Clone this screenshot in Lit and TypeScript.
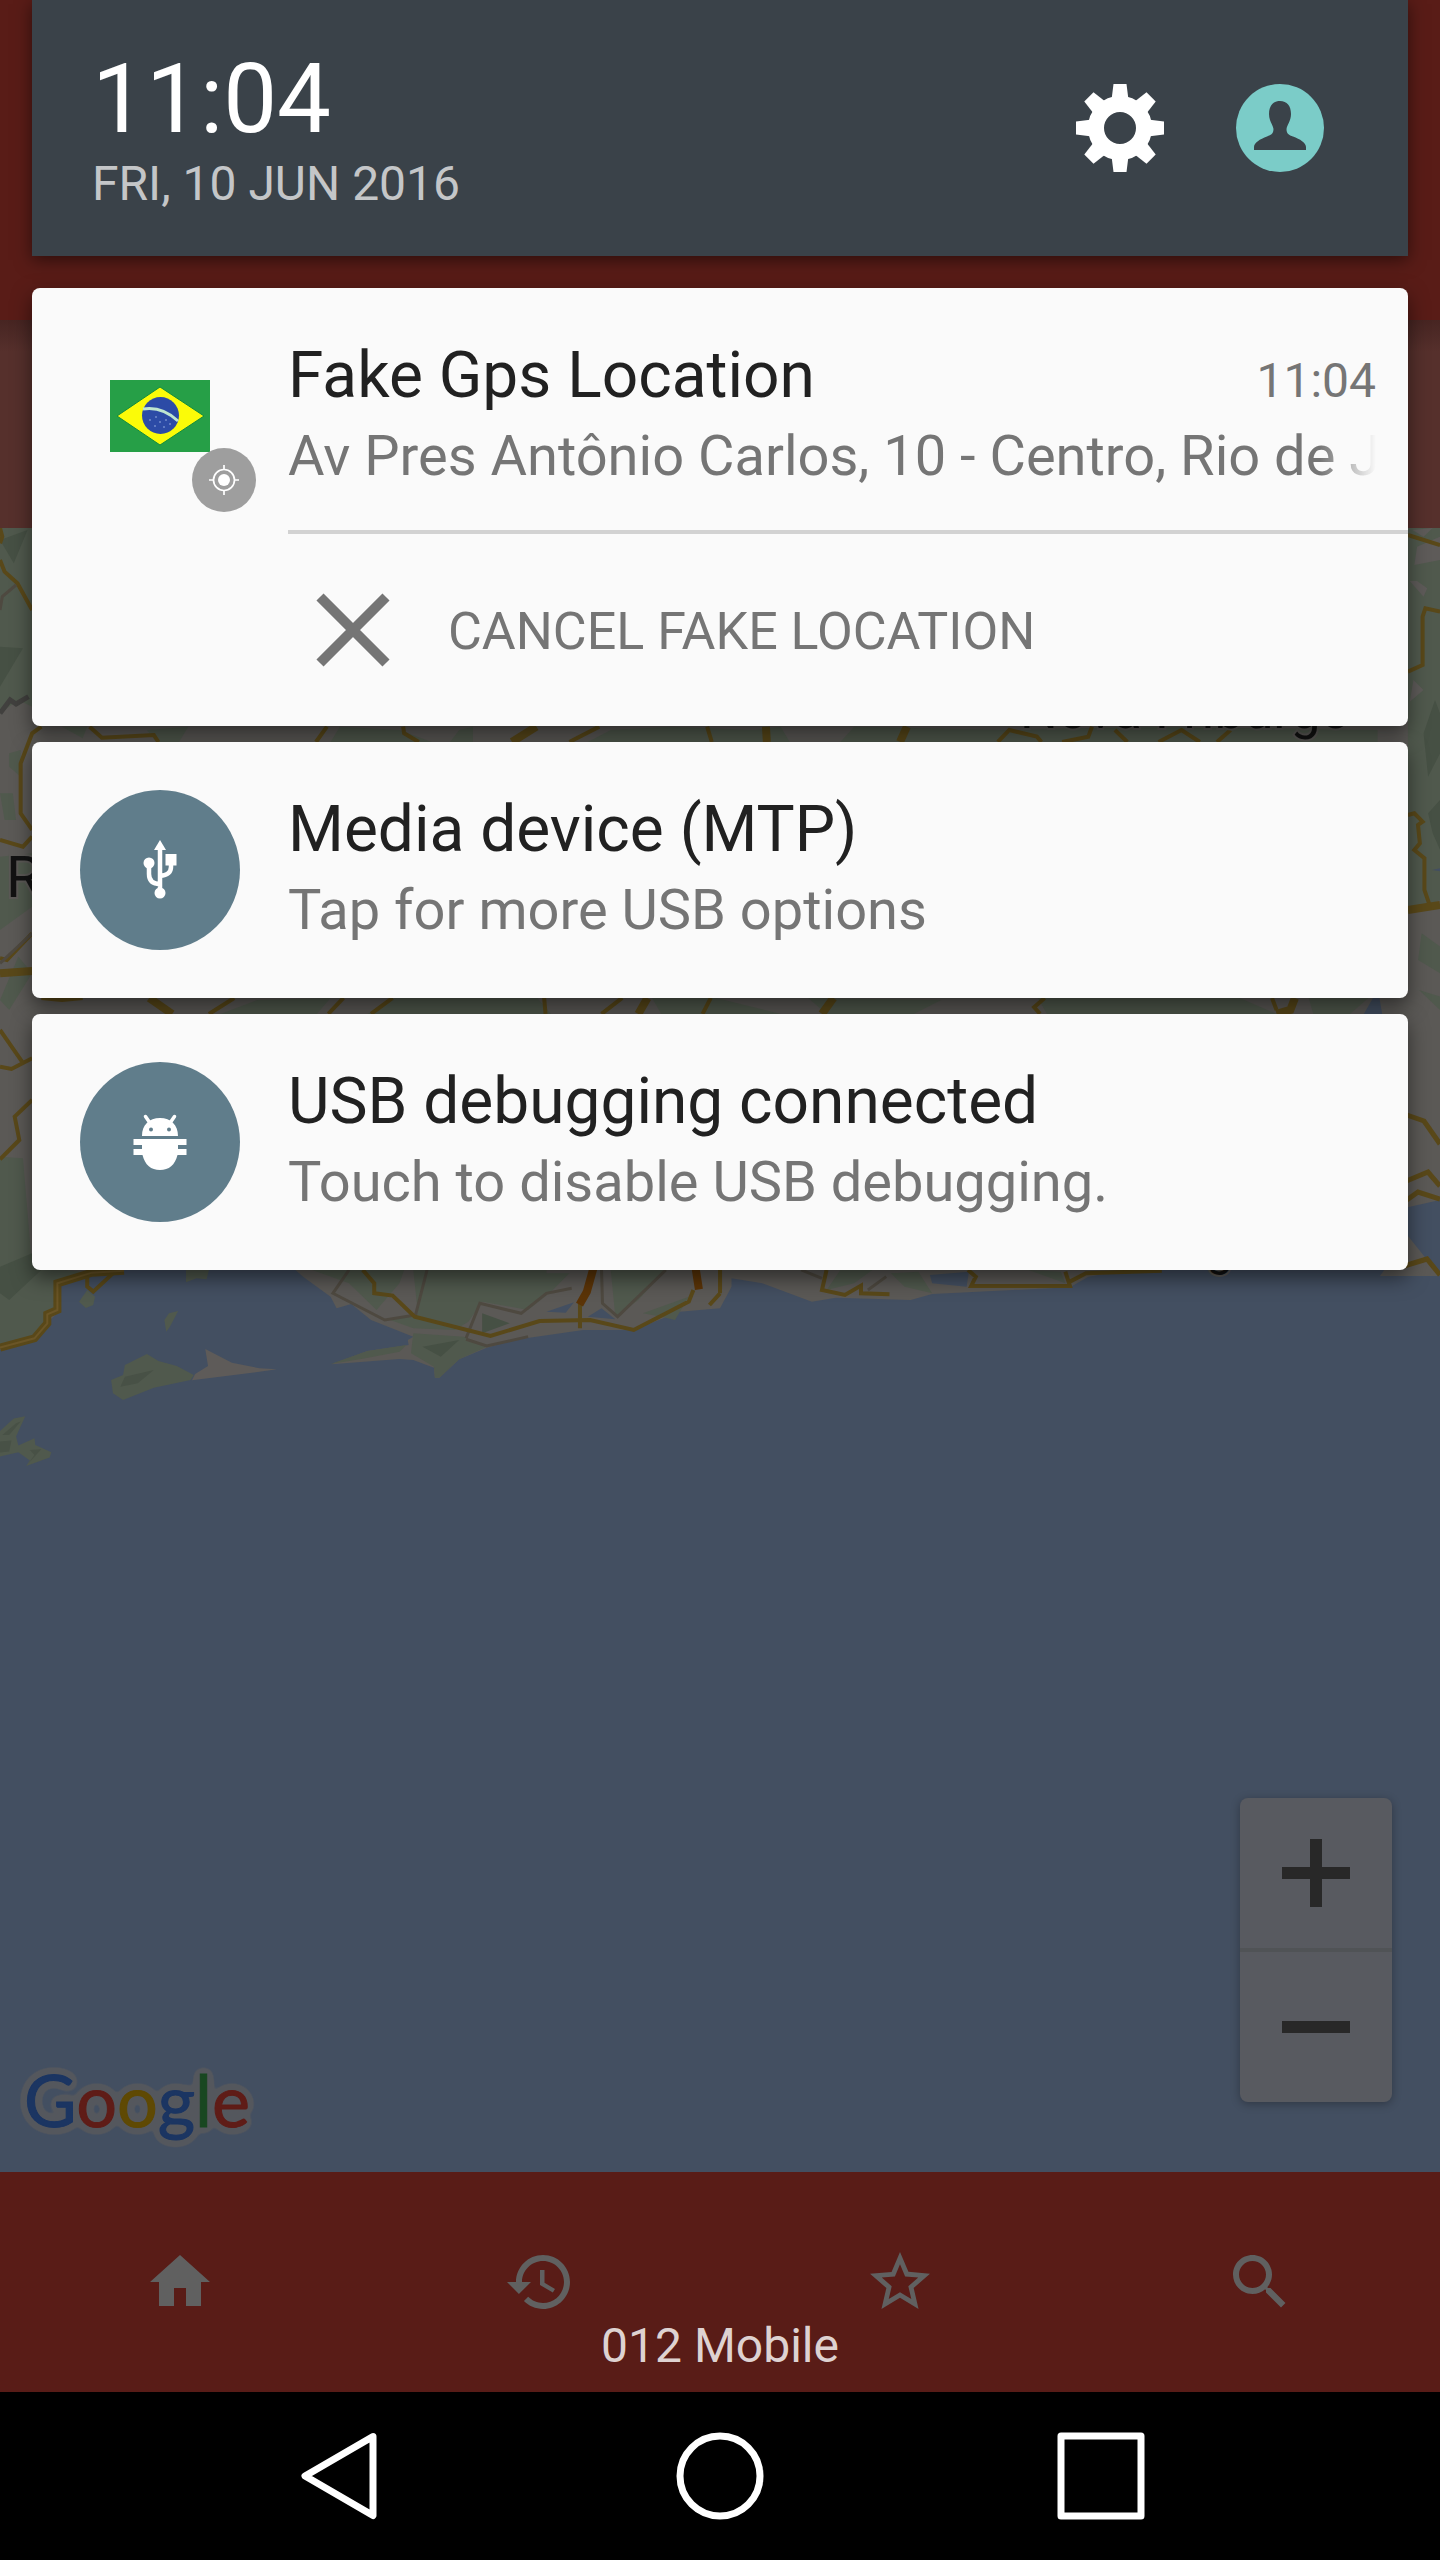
import { LitElement, html, css, svg, type TemplateResult } from "lit";
import { customElement, property } from "lit/decorators.js";

const FONT = css`Roboto, "Noto Sans", sans-serif`;

const resetButton = css`
  button {
    display: flex;
    align-items: center;
    justify-content: center;
    margin: 0;
    padding: 0;
    border: 0;
    background: none;
    color: inherit;
    font: inherit;
    cursor: pointer;
  }
  svg {
    display: block;
    flex: none;
  }
`;

/* ---------- Icons ---------- */

const gearIcon = html`<svg width="88" height="88" viewBox="-44 -44 88 88" aria-hidden="true">
  <circle r="24" fill="none" stroke="#fff" stroke-width="16"></circle>
  ${[0, 45, 90, 135, 180, 225, 270, 315].map(
    (a) => svg`<path d="M-6.5-44h13L8.5-28H-8.5z" fill="#fff" transform="rotate(${a})"></path>`
  )}
</svg>`;

const avatarIcon = html`<svg width="88" height="88" viewBox="-44 -44 88 88" aria-hidden="true">
  <circle r="44" fill="#7bccc8"></circle>
  <path
    fill="#3a4249"
    d="M0-27C7-27 11-22 11-14 11-7 7-3 6.5 1 6.5 6 9 7 13 8.500 20 11 26 15 26 19V22H-26V19C-26 15-20 11-13 8.500-9 7-6.500 6-6.500 1-7-3-11-7-11-14-11-22-7-27 0-27z"
  ></path>
</svg>`;

const flagIcon = html`<svg width="160" height="160" viewBox="0 0 160 160" overflow="visible" aria-hidden="true">
  <rect x="30" y="44" width="100" height="72" fill="#269f47"></rect>
  <path d="M80 51 124 80 80 109 37 80z" fill="#fbfb08" stroke="#128c3c" stroke-width="1"></path>
  <circle cx="80.500" cy="79.500" r="18.500" fill="#2c4ba6"></circle>
  <path d="M63 73Q82 70 98 85" fill="none" stroke="#bfe6cf" stroke-width="3"></path>
  <g fill="#6f8acb">
    <circle cx="70" cy="84" r="1"></circle><circle cx="76" cy="81" r="1"></circle>
    <circle cx="80" cy="86" r="1"></circle><circle cx="86" cy="84" r="1"></circle>
    <circle cx="75" cy="90" r="1"></circle><circle cx="84" cy="91" r="1"></circle>
    <circle cx="90" cy="88" r="1"></circle>
  </g>
  <circle cx="144" cy="144" r="32" fill="#9e9e9e"></circle>
  <g transform="translate(144 144)" fill="none" stroke="#fff" stroke-width="1.700">
    <circle r="10.500"></circle>
    <circle r="6" fill="#fff" stroke="none"></circle>
    <path d="M0-15v5M0 15v-5M-15 0h5M15 0h-5"></path>
  </g>
</svg>`;

const usbIcon = html`<svg width="160" height="160" viewBox="-80 -80 160 160" aria-hidden="true">
  <circle r="80" fill="#607d8b"></circle>
  <g fill="#fff">
    <path d="M0-30 6-20H-6z"></path>
    <circle cy="23" r="5.500"></circle>
    <circle cx="-11" cy="-7" r="5.500"></circle>
    <rect x="5.500" y="-16" width="11" height="11.500"></rect>
  </g>
  <path
    fill="none" stroke="#fff" stroke-width="4.500"
    d="M0-22V22M-11-5V4Q-11 14 0 14M11-6V-3Q11 5 0 6"
  ></path>
</svg>`;

const bugIcon = html`<svg width="160" height="160" viewBox="-80 -80 160 160" aria-hidden="true">
  <circle r="80" fill="#607d8b"></circle>
  <path
    fill="#fff"
    d="M-18-6C-18-17-11-24 0-24S18-17 18-6zM-26.500-3h53v6H18v4h8.500v6H17.500C15 23 9 28 0 28S-15 23-17.500 13h-9V7h8.500V3h-8.500z"
  ></path>
  <path d="M-10-19-14.500-25.500M10-19 14.500-25.500" stroke="#fff" stroke-width="3.500" stroke-linecap="round"></path>
  <circle cx="-9" cy="-12.500" r="2" fill="#607d8b"></circle>
  <circle cx="9" cy="-12.500" r="2" fill="#607d8b"></circle>
</svg>`;

const crossIcon = html`<svg width="128" height="128" viewBox="-64 -64 128 128" aria-hidden="true">
  <path d="M-32-33 34 33M34-33-32 33" stroke="#757575" stroke-width="10"></path>
</svg>`;

const tabIcon = (d: string) => html`<svg width="72" height="72" viewBox="0 0 24 24" fill="#606060" aria-hidden="true">
  <path d=${d}></path>
</svg>`;

const navIcon = (shape: TemplateResult) => html`<svg
  width="96" height="96" viewBox="-48 -48 96 96" fill="none" stroke="#fff" stroke-width="7"
  stroke-linejoin="round" aria-hidden="true"
>${shape}</svg>`;

/* ---------- Notification card ---------- */

@customElement("notification-card")
export class NotificationCard extends LitElement {
  @property() heading = "";
  @property() text = "";
  @property() time = "";
  @property() action = "";
  @property({ attribute: false }) icon: unknown = null;

  static styles = [
    resetButton,
    css`
      :host {
        display: block;
        font-family: ${FONT};
      }
      .card {
        background: #fafafa;
        border-radius: 8px;
        box-shadow: 0 8px 20px rgba(0, 0, 0, 0.5);
      }
      .head {
        display: flex;
        gap: 48px;
        padding: 48px 32px 46px 48px;
      }
      .with-action .head {
        padding-bottom: 32px;
      }
      .body {
        flex: 1;
        min-width: 0;
        padding-top: 2px;
      }
      .top {
        display: flex;
        align-items: baseline;
        justify-content: space-between;
      }
      h2 {
        margin: 0;
        font-size: 64px;
        font-weight: 400;
        line-height: 76px;
        color: #212121;
        white-space: nowrap;
      }
      time {
        font-size: 48px;
        line-height: 56px;
        color: #757575;
      }
      p {
        margin: 0 -16px 0 0;
        font-size: 56px;
        line-height: 84px;
        color: #757575;
        white-space: nowrap;
        overflow: hidden;
        mask-image: linear-gradient(to left, transparent 16px, #000 72px);
      }
      .actions {
        margin-left: 256px;
        border-top: 4px solid #d2d2d2;
      }
      .actions button {
        gap: 32px;
        height: 192px;
        color: #757575;
        font-size: 52px;
        line-height: 60px;
        text-transform: uppercase;
        white-space: nowrap;
      }
      .actions span {
        padding-top: 4px;
      }
    `,
  ];

  render() {
    return html`<article class="card ${this.action ? "with-action" : ""}">
      <div class="head">
        ${this.icon}
        <div class="body">
          <div class="top">
            <h2>${this.heading}</h2>
            ${this.time ? html`<time>${this.time}</time>` : null}
          </div>
          <p>${this.text}</p>
        </div>
      </div>
      ${this.action
        ? html`<div class="actions"><button type="button">${crossIcon}<span>${this.action}</span></button></div>`
        : null}
    </article>`;
  }
}

/* ---------- Map ---------- */

@customElement("coast-map")
export class CoastMap extends LitElement {
  static styles = [
    resetButton,
    css`
      :host {
        display: grid;
        background: #434f61;
        overflow: hidden;
        font-family: ${FONT};
      }
      .canvas {
        grid-area: 1 / 1;
        width: 100%;
        height: 100%;
        min-height: 0;
        contain: size;
      }
      .label {
        font-family: ${FONT};
        fill: #121212;
        stroke: #5b5956;
        stroke-width: 4px;
        paint-order: stroke;
      }
      .overlay {
        grid-area: 1 / 1;
        display: flex;
        align-items: flex-end;
        justify-content: space-between;
        padding: 0 48px 20px 16px;
      }
      .zoom {
        margin-bottom: 50px;
        width: 152px;
        border-radius: 8px;
        background: #585a60;
        box-shadow: 0 2px 10px rgba(0, 0, 0, 0.3);
      }
      .zoom button {
        width: 100%;
        height: 150px;
      }
      .zoom button + button {
        border-top: 4px solid #505356;
        height: 154px;
      }
      .google {
        font-family: Lato, sans-serif;
        font-size: 72px;
        font-weight: 400;
        stroke-width: 1px;
      }
    `,
  ];

  render() {
    return html`
      <svg class="canvas" viewBox="0 528 1440 1644" preserveAspectRatio="xMidYMin slice" role="img" aria-label="Map">
        <rect y="528" width="1440" height="560" fill="#5b5956"></rect>
        <g transform="translate(0 1000) scale(0.4592 0.3333)">
          <path fill="#5b5956" d="M0 0V1050L75 1020 105 965 128 935 132 850 195 815 280 800H635L660 830 720 890 733 925 765 912 808 960 900 1010 888 1020 890 1035 800 1053 722 1093 870 1077 900 1080 945 1103 947 1133H957L1000 1078 1060 1043 1130 1018 1270 990 1380 990 1480 935 1568 925 1593 860V835L1660 850 1768 905 1820 893 1983 900 2030 882 2330 862 2370 830 2470 806 3136 600V0z"></path>
          <path fill="#50594d" d="M0 470 50 475 70 800 180 815 128 850 122 930 75 1015 0 1040zM680 810H880L870 850 820 930 760 850zM850 960 900 985 990 990 1020 965 1050 905 1150 930 1200 875 1240 820H1190V810H900L910 940zM900 1000 1010 1010 1060 1040 1000 1078 957 1133H947L945 1100 895 1060zM720 1092 800 1053 885 1035 870 1055 790 1076zM1330 810H1450L1390 900 1340 950zM1400 940 1500 890 1470 960 1440 950zM1800 870 1830 810H1900L1860 850zM1940 820 2000 815 2030 880 1970 860zM2240 810 2310 815 2320 850z"></path>
          <path fill="#465044" d="M0 800 70 760 90 810 20 900 0 880zM920 1040 1000 1020 960 1070zM1050 940 1110 970 1050 1000z"></path>
          <path fill="#50594d" d="M320 1062 345 1083 385 1098 422 1125 415 1140 335 1163 268 1200 246 1180 242 1140 268 1125 272 1095zM405 810H455L450 838 428 835 405 847zM190 870 207 890 203 915 187 924 172 905zM388 933 370 980 362 995 358 960 368 940zM55 1249 35 1310 40 1337 75 1315 77 1335 112 1357 108 1373 57 1398 65 1382 40 1357 0 1370V1293L30 1256z"></path>
          <path fill="#5e5b59" d="M447 1047 505 1088 565 1105 603 1108 540 1120 418 1141 425 1122 453 1098z"></path>
          <path fill="#485146" d="M272 1130 335 1110 300 1150 262 1160zM0 1325 25 1322 20 1355 0 1358zM35 1270 45 1265 20 1305 5 1305zM65 1350 90 1348 62 1390 75 1365z"></path>
          <path fill="#434f61" d="M1190 935 1250 907 1232 938zM1280 950 1310 925 1340 958zM2025 825 2110 815 2105 860 2030 850z"></path>
          <g fill="none" stroke="#4e4940" stroke-width="3">
            <path vector-effect="non-scaling-stroke" d="M760 810 725 880 838 960 905 945 930 810M1015 1015 1045 910 1135 940 1190 880 1245 865M1310 810 1312 910 1345 950 1450 810M1015 1018 1060 1038 1150 1010M1745 810 1790 835M1930 830 1890 870"></path>
          </g>
          <g fill="none" stroke="#594819" stroke-width="4">
            <path vector-effect="non-scaling-stroke" d="M790 810 815 850V880L855 887 903 950 1068 1008 1175 963 1285 960 1380 990 1500 905 1510 870M1263 910V985M1545 915 1568 880M190 820V860L203 875 250 815M0 90 48 185M0 200 25 207 70 175M0 478 42 420 32 350 70 300M1568 880V810M1800 810 1790 870 1840 885 1875 857V880L1937 883M2108 810 2125 830 2115 858H2330L2320 815M2330 845 2365 820 2530 812"></path>
          </g>
          <path vector-effect="non-scaling-stroke" fill="none" stroke="#594819" stroke-width="8" d="M0 1043 75 1015 103 970V943L125 930V850L200 818 270 812"></path>
          <path vector-effect="non-scaling-stroke" fill="none" stroke="#6a5527" stroke-width="2" d="M0 1043 75 1015 103 970V943L125 930V850L200 818 270 812"></path>
          <path vector-effect="non-scaling-stroke" fill="none" stroke="#5b3407" stroke-width="8" d="M1292 806 1278 875 1262 914M1515 806 1522 868"></path>
        </g>
        <g transform="translate(0 500) scale(0.4592 0.3333)">
          <path fill="#50594d" d="M0 84H70V620L40 600 0 640zM135 680H190L180 715zM320 690 410 680 390 726H340zM740 680 870 690 940 726H720zM1000 690 1030 680V726H980zM1330 690 1460 680 1640 690 1700 680 1720 726H1280zM1860 680 2200 690 2500 680 3000 690V726H1830zM20 760 45 750 45 830 20 800zM0 880 28 880 35 960H10zM0 1070 70 1060V1220L0 1290zM40 1370 70 1420 20 1530 0 1500zM480 1542 560 1500 720 1494 690 1542zM860 1494H1170L1200 1542H800zM1420 1494 1560 1494 1700 1542H1440zM1760 1494 2050 1500 1990 1542H1800zM2260 1494H2700L2780 1542H2280zM2850 1494H2980L2940 1542H2860z"></path>
          <path fill="#50594d" d="M3066 84H3136V1200L3066 1240zM3088 1380 3096 1300 3136 1340V1420zM3090 1470 3136 1490V1530z"></path>
          <path fill="#465044" d="M3100 700 3125 600 3136 640V760L3110 830zM3110 940 3136 900V1050L3120 1000zM0 120 60 90 30 190zM0 440 50 445 0 560z"></path>
          <path fill="#5e5b59" d="M3076 90 3120 84 3100 110zM3086 140 3136 110V180L3080 195zM3070 243 3086 243 3108 265 3100 290zM3078 540 3100 570 3070 605z"></path>
          <path fill="#434f61" d="M2970 1542 2990 1494H3004L3010 1542zM3118 1110 3136 1105V1114z"></path>
          <g fill="none" stroke="#594819" stroke-width="4">
            <path vector-effect="non-scaling-stroke" d="M0 84 5 110 0 130M0 180 10 215 38 250 70 330M90 680 70 700 45 790V940L70 990M0 1020 50 1040 70 1010M0 1375 15 1380 70 1300M195 680 222 713 335 705 345 726M712 680 688 726M878 680 880 700 912 726M1305 680 1240 726M1540 680 1550 726M2173 726 2198 690 2258 710 2268 726M2313 726 2370 710 2378 680M2428 690 2455 726M2523 726 2573 690 2613 726M2680 690 2650 726M3066 105 3136 135M3136 335 3104 325 3098 350V495L3066 515M3066 945 3080 940 3098 965 3088 975 3092 1030 3080 1050 3102 1075V1170L3112 1210M90 1494 135 1500 180 1494M510 1494 455 1542M748 1494 715 1542M855 1494 808 1542M1185 1494 1188 1542M1355 1494 1310 1542M1548 1494 1530 1542M2275 1494 2252 1522 2265 1542M2770 1494 2780 1530"></path>
          </g>
          <g fill="none" stroke="#594819" stroke-width="8">
            <path vector-effect="non-scaling-stroke" d="M1168 680 1115 726M1668 680 1670 726M1975 680 1960 726M0 1420 70 1413M325 1494 375 1542M1410 1494 1390 1542M1815 1494 1790 1542M2820 1494 2810 1530 2780 1542M3066 1230 3136 1215"></path>
          </g>
          <path vector-effect="non-scaling-stroke" fill="none" stroke="#41403e" stroke-width="5" d="M0 640 22 600 35 612 62 590"></path>
          <path vector-effect="non-scaling-stroke" fill="none" stroke="#4e4940" stroke-width="3" d="M0 330 5 290 35 255M0 1390 70 1300"></path>
        </g>
        <path fill="#5b5956" d="M1408 1236 1440 1276H1380z"></path>
        <path fill="none" stroke="#594819" stroke-width="5" d="M1404 1114 1424 1121 1440 1144M1404 1182 1428 1172 1440 1186M1404 1202 1418 1192 1440 1199M1404 1266 1427 1259 1440 1275"></path>
        <text class="label" x="1020" y="728" font-size="53">Nova Friburgo</text>
        <text class="label" x="6" y="897" font-size="58">R</text>
        <text class="label" x="1207" y="1266" font-size="46">g</text>
      </svg>
      <div class="overlay">
        <svg width="248" height="100" viewBox="0 0 248 100" role="img" aria-label="Google">
          <filter id="halo" x="-20%" y="-20%" width="140%" height="140%" color-interpolation-filters="sRGB">
            <feGaussianBlur in="SourceAlpha" stdDeviation="5"></feGaussianBlur>
            <feComponentTransfer result="shape"><feFuncA type="linear" slope="24" intercept="-1"></feFuncA></feComponentTransfer>
            <feFlood flood-color="#54575d"></feFlood>
            <feComposite operator="in" in2="shape" result="edge"></feComposite>
            <feMerge><feMergeNode in="edge"></feMergeNode><feMergeNode in="SourceGraphic"></feMergeNode></feMerge>
          </filter>
          <text class="google" x="8" y="75" filter="url(#halo)"><tspan fill="#1b3562" stroke="#1b3562">G</tspan><tspan fill="#5f1c17" stroke="#5f1c17">o</tspan><tspan fill="#5f4903" stroke="#5f4903">o</tspan><tspan fill="#1b3562" stroke="#1b3562">g</tspan><tspan fill="#184721" stroke="#184721">l</tspan><tspan fill="#5f1c17" stroke="#5f1c17">e</tspan></text>
        </svg>
        <div class="zoom">
          <button type="button" aria-label="Zoom in">
            <svg width="68" height="68" viewBox="0 0 68 68"><path fill="#282828" d="M28 0h12v28h28v12H40v28H28V40H0V28h28z"></path></svg>
          </button>
          <button type="button" aria-label="Zoom out">
            <svg width="68" height="68" viewBox="0 0 68 68"><path fill="#282828" d="M0 28h68v12H0z"></path></svg>
          </button>
        </div>
      </div>
    `;
  }
}

/* ---------- Screen ---------- */

const TABS = [
  { label: "Home", d: "M10 20v-6h4v6h5v-8h3L12 3 2 12h3v8z" },
  {
    label: "History",
    d: "M13 3c-4.970 0-9 4.030-9 9H1l3.890 3.890.070.140L9 12H6c0-3.870 3.130-7 7-7s7 3.130 7 7-3.130 7-7 7c-1.930 0-3.680-.790-4.940-2.060l-1.420 1.420C8.270 19.990 10.510 21 13 21c4.970 0 9-4.030 9-9s-4.030-9-9-9zm-1 5v5l4.280 2.540.720-1.210-3.500-2.080V8H12z",
  },
  {
    label: "Favourites",
    d: "M22 9.240l-7.190-.620L12 2 9.190 8.630 2 9.240l5.460 4.730L5.820 21 12 17.270 18.180 21l-1.630-7.030L22 9.240zM12 15.400l-3.760 2.270 1-4.280-3.320-2.880 4.380-.380L12 6.100l1.710 4.040 4.380.380-3.320 2.880 1 4.280L12 15.400z",
  },
  {
    label: "Search",
    d: "M15.500 14h-.790l-.280-.270C15.410 12.590 16 11.110 16 9.500 16 5.910 13.090 3 9.500 3S3 5.910 3 9.500 5.910 16 9.500 16c1.610 0 3.090-.590 4.230-1.570l.270.280v.790l5 4.990L20.490 19l-4.990-5zm-6 0C7.010 14 5 11.990 5 9.500S7.010 5 9.500 5 14 7.010 14 9.500 11.990 14 9.500 14z",
  },
];

@customElement("app-root")
export class AppRoot extends LitElement {
  static styles = [
    resetButton,
    css`
      :host {
        display: block;
        font-family: ${FONT};
      }
      .screen {
        display: grid;
        grid-template: 1fr auto / minmax(0, 1fr);
        min-height: 100vh;
        background: #000;
      }
      .app,
      .shade {
        grid-area: 1 / 1;
        display: flex;
        flex-direction: column;
      }
      .toolbar {
        height: 320px;
        background: #591c17;
      }
      .search-strip {
        height: 208px;
        background: linear-gradient(#472522, #56302c 32px);
      }
      coast-map {
        flex: 1;
      }
      .tabs {
        display: grid;
        grid-template-columns: repeat(4, 1fr);
        height: 220px;
        background: #591c17;
      }
      .shade {
        gap: 16px;
        padding: 0 32px;
        z-index: 1;
        pointer-events: none;
      }
      .shade > * {
        pointer-events: auto;
      }
      .status {
        display: flex;
        align-items: center;
        justify-content: space-between;
        height: 256px;
        margin-bottom: 16px;
        padding: 0 84px 0 60px;
        background: #3a4249;
        box-shadow: 0 4px 16px rgba(0, 0, 0, 0.5);
      }
      .clock {
        font-size: 96px;
        line-height: 112px;
        color: #fff;
      }
      .date {
        font-size: 48px;
        line-height: 58px;
        color: #c4c6c8;
        text-transform: uppercase;
      }
      .quick {
        display: flex;
        gap: 72px;
      }
      .carrier {
        margin-top: auto;
        padding-bottom: 18px;
        font-size: 48px;
        line-height: 56px;
        text-align: center;
        color: #ded2d1;
      }
      .nav {
        display: grid;
        grid-template-columns: repeat(3, 1fr);
        height: 168px;
        padding: 0 148px;
        background: #000;
      }
    `,
  ];

  render() {
    return html`<div class="screen">
      <div class="app">
        <div class="toolbar"></div>
        <div class="search-strip"></div>
        <coast-map></coast-map>
        <div class="tabs">
          ${TABS.map((t) => html`<button type="button" aria-label=${t.label}>${tabIcon(t.d)}</button>`)}
        </div>
      </div>
      <div class="shade">
        <header class="status">
          <div>
            <div class="clock">11:04</div>
            <div class="date">Fri, 10 Jun 2016</div>
          </div>
          <div class="quick">
            <button type="button" aria-label="Settings">${gearIcon}</button>
            <button type="button" aria-label="User">${avatarIcon}</button>
          </div>
        </header>
        <notification-card
          heading="Fake Gps Location"
          time="11:04"
          text="Av Pres Antônio Carlos, 10 - Centro, Rio de J"
          action="Cancel fake location"
          .icon=${flagIcon}
        ></notification-card>
        <notification-card
          heading="Media device (MTP)"
          text="Tap for more USB options"
          .icon=${usbIcon}
        ></notification-card>
        <notification-card
          heading="USB debugging connected"
          text="Touch to disable USB debugging."
          .icon=${bugIcon}
        ></notification-card>
        <div class="carrier">012 Mobile</div>
      </div>
      <nav class="nav">
        <button type="button" aria-label="Back">${navIcon(svg`<path d="M34-39.500-34 0 34 39.500z"></path>`)}</button>
        <button type="button" aria-label="Home">${navIcon(svg`<circle r="40"></circle>`)}</button>
        <button type="button" aria-label="Recents">${navIcon(svg`<rect x="-40" y="-40" width="80" height="80"></rect>`)}</button>
      </nav>
    </div>`;
  }
}
